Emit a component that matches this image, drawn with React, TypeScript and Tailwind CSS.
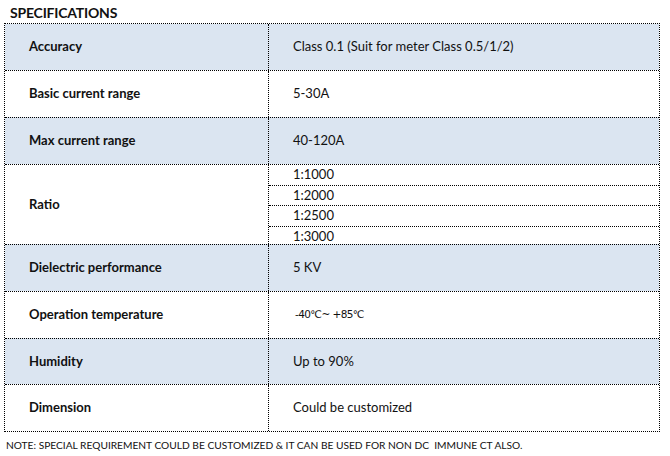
const rows: { label: string; value: string | string[]; shaded: boolean; h: string }[] = [
  { label: "Accuracy", value: "Class 0.1 (Suit for meter Class 0.5/1/2)", shaded: true, h: "h-[46px]" },
  { label: "Basic current range", value: "5-30A", shaded: false, h: "h-[47px]" },
  { label: "Max current range", value: "40-120A", shaded: true, h: "h-[47px]" },
  { label: "Ratio", value: ["1:1000", "1:2000", "1:2500", "1:3000"], shaded: false, h: "h-[80px]" },
  { label: "Dielectric performance", value: "5 KV", shaded: true, h: "h-[47px]" },
  { label: "Operation temperature", value: "-40℃~ +85℃", shaded: false, h: "h-[47px]" },
  { label: "Humidity", value: "Up to 90%", shaded: true, h: "h-[46px]" },
  { label: "Dimension", value: "Could be customized", shaded: false, h: "h-[47px]" },
];

export default function App() {
  return (
    <div className="w-[670px] h-[456px] bg-white text-[#111] font-['Lato','Open_Sans',sans-serif] overflow-hidden">
      <h1 className="pl-[10px] pt-[4px] text-[14px] leading-[18px] font-bold tracking-[-0.2px]">SPECIFICATIONS</h1>
      <div className="ml-[4px] mt-[1px] w-[656px] border border-dotted border-black">
        {rows.map((r, i) => (
          <div
            key={r.label}
            className={`flex ${r.h} ${i > 0 ? "border-t border-dotted border-black" : ""} ${r.shaded ? "bg-[#dbe5f1]" : "bg-white"}`}
          >
            <div className="w-[264px] shrink-0 border-r border-dotted border-black flex items-center pl-[24px] text-[13px] font-bold">
              {r.label}
            </div>
            {Array.isArray(r.value) ? (
              <div className="flex-1 flex flex-col">
                {r.value.map((v, j) => (
                  <div
                    key={v}
                    className={`flex-1 flex items-center pl-[24px] text-[13px] ${j > 0 ? "border-t border-dotted border-black" : ""}`}
                  >
                    {v}
                  </div>
                ))}
              </div>
            ) : (
              <div
                className={`flex-1 flex items-center ${r.label === "Operation temperature" ? "text-[10.5px] pl-[26px] tracking-[-0.6px] font-['DejaVu_Sans',sans-serif]" : "text-[13px] pl-[24px]"}`}
              >
                {r.value}
              </div>
            )}
          </div>
        ))}
      </div>
      <p className="pl-[6px] pt-[6px] text-[10.2px] leading-[14px]">
        NOTE: SPECIAL REQUIREMENT COULD BE CUSTOMIZED &amp; IT CAN BE USED FOR NON DC&nbsp; IMMUNE CT ALSO.
      </p>
    </div>
  );
}
